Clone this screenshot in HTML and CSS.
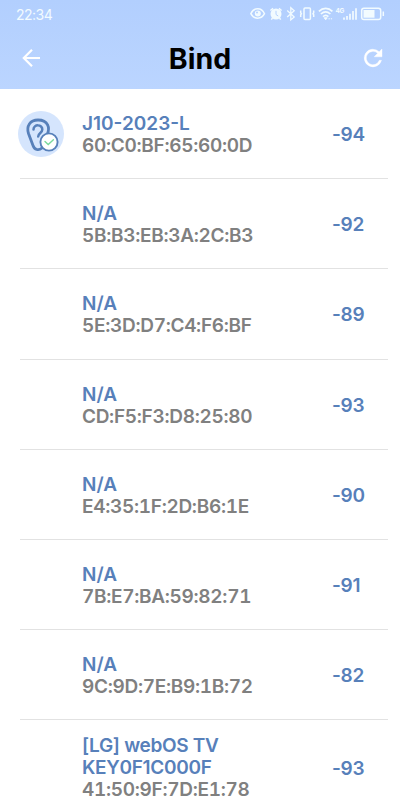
FILE: index.html
```
<!DOCTYPE html>
<html lang="en">
<head>
    <meta charset="UTF-8">
    <meta name="viewport" content="width=device-width, initial-scale=1.0">
    <title>Bind</title>
    <link rel="stylesheet" href="styles.css">
</head>
<body>
    <header class="header">
        <div class="status-bar">
            <span class="time">22:34</span>
            <svg class="status-icons" width="136" height="16" viewBox="0 0 136 16" fill="none" stroke="#f2fbff" stroke-width="1.5">
                <!-- eye -->
                <path d="M.8 7.700C4 1 11.400 1 14.500 7.700 11.400 13.700 4 13.700.8 7.700Z"/>
                <circle cx="7.800" cy="7.600" r="3" fill="#f2fbff" stroke="none"/>
                <circle cx="7" cy="6.500" r="1" fill="#b6d2fe" stroke="none"/>
                <!-- alarm -->
                <circle cx="26" cy="8" r="5.500" fill="#f2fbff" stroke="none"/>
                <path d="M20.400 4.500l2.700-2.200M31.600 4.500l-2.700-2.200M22.500 12l-1.200 1.600M29.500 12l1.200 1.600"/>
                <path d="M26 4.800v3.700l2.200 1.500" stroke="#b6d2fe" stroke-width="1"/>
                <!-- bluetooth -->
                <path d="M37.200 4.600l7 6.300-3.400 3V1.700l3.400 3-7 6.300" stroke-width="1.300"/>
                <!-- vibrate -->
                <rect x="54" y="2" width="6.400" height="11.500" rx="1"/>
                <path d="M50.700 4.500v2.200l.7 1-.7 1v2.300M63.700 4.500v2.200l-.7 1 .7 1v2.300"/>
                <!-- wifi -->
                <path d="M68.900 5.300c4-3.900 9.500-3.900 13.500 0M70.900 8c3-2.800 6.500-2.800 9.500 0M73 10.600c1.600-1.500 3.800-1.500 5.400 0" stroke-width="1.700"/>
                <path d="M74.200 11.800h3l-1.500 2zM78.500 12.800h1.300M80.800 12.800h1.300" fill="#f2fbff" stroke-width="1"/>
                <!-- signal -->
                <path d="M94 11.500v2.300M97 10v3.800M100 7.700v6.100M103 5v8.800M106 2.300v11.500" stroke-width="1.700"/>
                <!-- battery -->
                <rect x="111.700" y="2.200" width="19" height="11.300" rx="2.300"/>
                <path d="M113.500 4h11v7.700h-11z" fill="#f2fbff" stroke="none"/>
                <path d="M133.300 5.500v4.500"/>
                <text class="network" x="85.500" y="7">4G</text>
            </svg>
        </div>
        <div class="title-bar">
            <svg class="icon" width="24" height="24" viewBox="0 0 24 24" fill="none" stroke="#fff" stroke-width="2.200">
                <path d="M21 12H5M13 3.800L4.800 12l8.200 8.200"/>
            </svg>
            <h1>Bind</h1>
            <svg class="icon" width="24" height="24" viewBox="0 0 24 24" fill="#fff" stroke="#fff" stroke-width=".4">
                <path d="M18.200 5.800A8.800 8.800 0 1 0 20.500 14.300h-2.200A6.700 6.700 0 1 1 16.700 7.300L13.200 10.800H21V3Z"/>
            </svg>
        </div>
    </header>

    <main class="device-list">
        <div class="device">
            <div class="avatar">
                <svg width="46" height="46" viewBox="0 0 46 46" fill="none" stroke="#5780ba" stroke-linecap="round">
                    <path d="M29.300 23C32 17.500 30.500 9 20 9 12 9 8.200 15 10.500 22.500L15 34.500C16.500 38.800 20.500 40 24 37" stroke-width="2.800"/>
                    <path d="M15.500 18.500C15.500 12.800 24.500 13.200 24.300 18.500 24.200 22 20.500 22 20.200 25.500" stroke-width="2.500"/>
                    <circle cx="31" cy="31" r="8.600" fill="#fff" stroke-width="1.900"/>
                    <path d="M27 30.500l3.200 3 5.200-4.800" stroke="#79d99b" stroke-width="1.400"/>
                </svg>
            </div>
            <div class="info">
                <div class="name">J10-2023-L</div>
                <div class="address">60:C0:BF:65:60:0D</div>
            </div>
            <div class="rssi">-94</div>
        </div>
        <div class="device">
            <div class="info">
                <div class="name">N/A</div>
                <div class="address">5B:B3:EB:3A:2C:B3</div>
            </div>
            <div class="rssi">-92</div>
        </div>
        <div class="device">
            <div class="info">
                <div class="name">N/A</div>
                <div class="address">5E:3D:D7:C4:F6:BF</div>
            </div>
            <div class="rssi">-89</div>
        </div>
        <div class="device">
            <div class="info">
                <div class="name">N/A</div>
                <div class="address">CD:F5:F3:D8:25:80</div>
            </div>
            <div class="rssi">-93</div>
        </div>
        <div class="device">
            <div class="info">
                <div class="name">N/A</div>
                <div class="address">E4:35:1F:2D:B6:1E</div>
            </div>
            <div class="rssi">-90</div>
        </div>
        <div class="device">
            <div class="info">
                <div class="name">N/A</div>
                <div class="address">7B:E7:BA:59:82:71</div>
            </div>
            <div class="rssi">-91</div>
        </div>
        <div class="device">
            <div class="info">
                <div class="name">N/A</div>
                <div class="address">9C:9D:7E:B9:1B:72</div>
            </div>
            <div class="rssi">-82</div>
        </div>
        <div class="device tall">
            <div class="info">
                <div class="name">[LG] webOS TV<br>KEY0F1C000F</div>
                <div class="address">41:50:9F:7D:E1:78</div>
            </div>
            <div class="rssi">-93</div>
        </div>
    </main>
</body>
</html>
```
FILE: styles.css
```
* {
    box-sizing: border-box;
}
body {
    margin: 0;
    height: 800px;
    overflow: hidden;
    background-color: #fff;
    font-family: Inter, "Liberation Sans", sans-serif;
}
.header {
    height: 89px;
    background: linear-gradient(#b2cffe, #bbd5ff);
}
.status-bar {
    display: flex;
    justify-content: space-between;
    align-items: center;
    height: 28px;
    padding: 0 14px 0 16px;
}
.time {
    color: #f2fbff;
    font-size: 14px;
    letter-spacing: -0.5px;
}
.network {
    fill: #f2fbff;
    stroke: none;
    font-size: 6.5px;
    font-weight: 700;
    letter-spacing: -0.5px;
}
.title-bar {
    display: flex;
    justify-content: space-between;
    align-items: center;
    height: 60px;
    padding: 0 15px 0 19px;
}
.icon {
    display: block;
}
h1 {
    margin: 0 4px 0 0;
    color: #000;
    font-size: 28.5px;
    font-weight: 700;
}
.device-list {
    padding: 0 12px 0 20px;
}
.device {
    display: flex;
    align-items: center;
    height: 90.2px;
    padding-left: 62px;
    border-bottom: 1px solid #e2e2e2;
}
.avatar {
    width: 46px;
    height: 46px;
    margin: 0 18px 0 -64px;
    border-radius: 50%;
    background-color: #d5e5fd;
}
.info {
    flex: 1;
    padding-top: 3px;
    font-size: 19px;
    font-weight: 600;
    line-height: 22px;
    white-space: nowrap;
}
.name {
    color: #5780ba;
}
.address {
    color: #808080;
    letter-spacing: -0.3px;
    font-variant-numeric: tabular-nums;
}
.rssi {
    width: 56px;
    padding-top: 2px;
    color: #5780ba;
    font-size: 19px;
    font-weight: 600;
    letter-spacing: -0.3px;
}
.tall {
    height: 96px;
}
.tall .info {
    padding-top: 1px;
}
.tall .name {
    letter-spacing: -0.3px;
}
.tall .rssi {
    padding-top: 1px;
}
```
